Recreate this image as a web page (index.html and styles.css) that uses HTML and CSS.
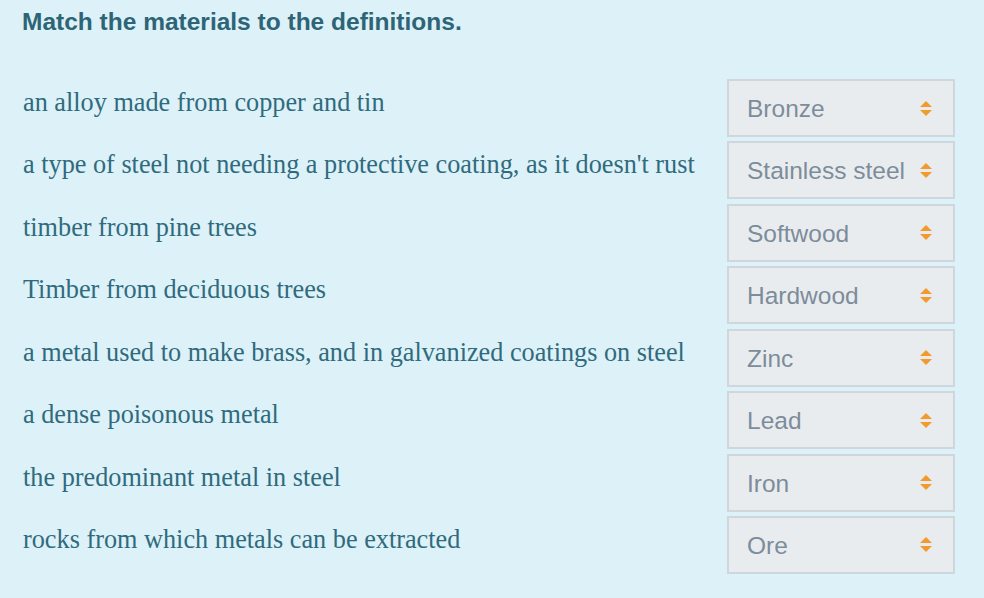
FILE: index.html
```html
<!DOCTYPE html>
<html>
<head>
    <title>Match the materials</title>
    <link rel="stylesheet" href="styles.css">
</head>
<body>
    <div id="quiz">
        <h2 class="question">Match the materials to the definitions.</h2>
        <div class="rows">
            <div class="row">
                <div class="definition">an alloy made from copper and tin</div>
                <div class="select"><span class="choice">Bronze</span><span class="arrows"></span></div>
            </div>
            <div class="row">
                <div class="definition">a type of steel not needing a protective coating, as it doesn't rust</div>
                <div class="select"><span class="choice">Stainless steel</span><span class="arrows"></span></div>
            </div>
            <div class="row">
                <div class="definition">timber from pine trees</div>
                <div class="select"><span class="choice">Softwood</span><span class="arrows"></span></div>
            </div>
            <div class="row">
                <div class="definition">Timber from deciduous trees</div>
                <div class="select"><span class="choice">Hardwood</span><span class="arrows"></span></div>
            </div>
            <div class="row">
                <div class="definition">a metal used to make brass, and in galvanized coatings on steel</div>
                <div class="select"><span class="choice">Zinc</span><span class="arrows"></span></div>
            </div>
            <div class="row">
                <div class="definition">a dense poisonous metal</div>
                <div class="select"><span class="choice">Lead</span><span class="arrows"></span></div>
            </div>
            <div class="row">
                <div class="definition">the predominant metal in steel</div>
                <div class="select"><span class="choice">Iron</span><span class="arrows"></span></div>
            </div>
            <div class="row">
                <div class="definition">rocks from which metals can be extracted</div>
                <div class="select"><span class="choice">Ore</span><span class="arrows"></span></div>
            </div>
        </div>
    </div>
</body>
</html>
```

FILE: styles.css
```css
body {
    margin: 0;
    padding: 0;
    background-color: #ddf1f8;
    font-family: "Liberation Serif", "Times New Roman", serif;
    color: #2f6b7d;
}
#quiz {
    padding: 7px 29px 0 23px;
}
.question {
    margin: 0;
    font-family: "Liberation Sans", Arial, sans-serif;
    font-size: 24.5px;
    font-weight: bold;
    color: #2d6577;
    line-height: 30px;
    margin-left: -1px;
}
.rows {
    margin-top: 42px;
    display: flex;
    flex-direction: column;
    gap: 4.43px;
}
.row {
    display: flex;
    justify-content: space-between;
    align-items: flex-start;
}
.definition {
    font-size: 26.25px;
    line-height: 30px;
    padding-top: 9px;
}
.select {
    width: 228px;
    height: 58px;
    box-sizing: border-box;
    border: 2px solid #d0d7dc;
    background-color: #e9ecef;
    display: flex;
    align-items: center;
    justify-content: space-between;
    padding: 2px 21px 0 18px;
    font-family: "Liberation Sans", Arial, sans-serif;
    font-size: 24.5px;
    color: #7d8c9a;
}
/* up and down triangles */
.arrows {
    width: 12px;
    height: 15px;
    position: relative;
    flex-shrink: 0;
    margin-top: -2px;
}
.arrows::before,
.arrows::after {
    content: "";
    position: absolute;
    left: 0;
    border-left: 6px solid transparent;
    border-right: 6px solid transparent;
}
.arrows::before {
    top: 0;
    border-bottom: 6px solid #f29a2e;
}
.arrows::after {
    bottom: 0;
    border-top: 6px solid #f29a2e;
}
```
